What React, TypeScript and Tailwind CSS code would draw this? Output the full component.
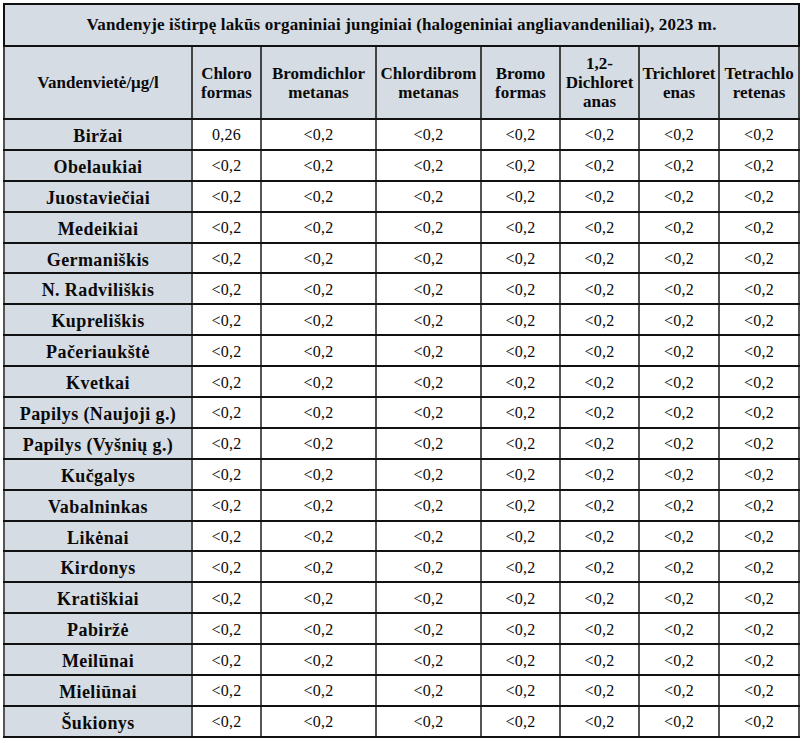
import React from "react";

const rows = [
  "Biržai",
  "Obelaukiai",
  "Juostaviečiai",
  "Medeikiai",
  "Germaniškis",
  "N. Radviliškis",
  "Kupreliškis",
  "Pačeriaukštė",
  "Kvetkai",
  "Papilys (Naujoji g.)",
  "Papilys (Vyšnių g.)",
  "Kučgalys",
  "Vabalninkas",
  "Likėnai",
  "Kirdonys",
  "Kratiškiai",
  "Pabiržė",
  "Meilūnai",
  "Mieliūnai",
  "Šukionys",
];

const headers: string[][] = [
  ["Chloro", "formas"],
  ["Bromdichlor", "metanas"],
  ["Chlordibrom", "metanas"],
  ["Bromo", "formas"],
  ["1,2-", "Dichloret", "anas"],
  ["Trichloret", "enas"],
  ["Tetrachlo", "retenas"],
];

export default function App() {
  return (
    <div className="bg-white w-[802px] h-[743px] pt-[3px] pl-[3px] [font-family:'Liberation_Serif','Times_New_Roman',serif] text-[#0a0a0a]">
      <table className="table-fixed border-collapse border-2 border-[#111] w-[795px]">
        <colgroup>
          <col className="w-[188px]" />
          <col className="w-[69px]" />
          <col className="w-[115px]" />
          <col className="w-[105px]" />
          <col className="w-[79px]" />
          <col className="w-[79px]" />
          <col className="w-[80px]" />
          <col className="w-[80px]" />
        </colgroup>
        <thead>
          <tr className="h-[42px]">
            <th
              colSpan={8}
              className="bg-[#d6dce4] border-2 border-[#111] text-[17px] tracking-[0.15px] font-bold text-center align-middle"
            >
              Vandenyje ištirpę lakūs organiniai junginiai (halogeniniai angliavandeniliai), 2023 m.
            </th>
          </tr>
          <tr className="h-[73px]">
            <th className="bg-[#d6dce4] border-y-2 border-x-2 border-y-[#111] border-x-[#444] text-[17px] font-bold text-center align-middle">
              Vandenvietė/μg/l
            </th>
            {headers.map((h, i) => (
              <th
                key={i}
                className="bg-[#d6dce4] border-y-2 border-x-2 border-y-[#111] border-x-[#444] text-[17px] leading-[19px] font-bold text-center align-middle whitespace-nowrap"
              >
                {h.map((line, j) => (
                  <div key={j}>{line}</div>
                ))}
              </th>
            ))}
          </tr>
        </thead>
        <tbody>
          {rows.map((name, r) => (
            <tr key={name} className="h-[30.9px]">
              <th className="bg-[#d6dce4] border-y-2 border-x-2 border-y-[#111] border-x-[#555] text-[18px] tracking-[0.4px] font-bold text-center align-middle whitespace-nowrap pt-[3px] leading-[24px]">
                {name}
              </th>
              {headers.map((_, i) => (
                <td
                  key={i}
                  className="bg-white border-y-2 border-x-2 border-y-[#111] border-x-[#555] text-[16px] tracking-[0.2px] text-center align-middle pt-[2px] leading-[22px]"
                >
                  {r === 0 && i === 0 ? "0,26" : "<0,2"}
                </td>
              ))}
            </tr>
          ))}
        </tbody>
      </table>
    </div>
  );
}
